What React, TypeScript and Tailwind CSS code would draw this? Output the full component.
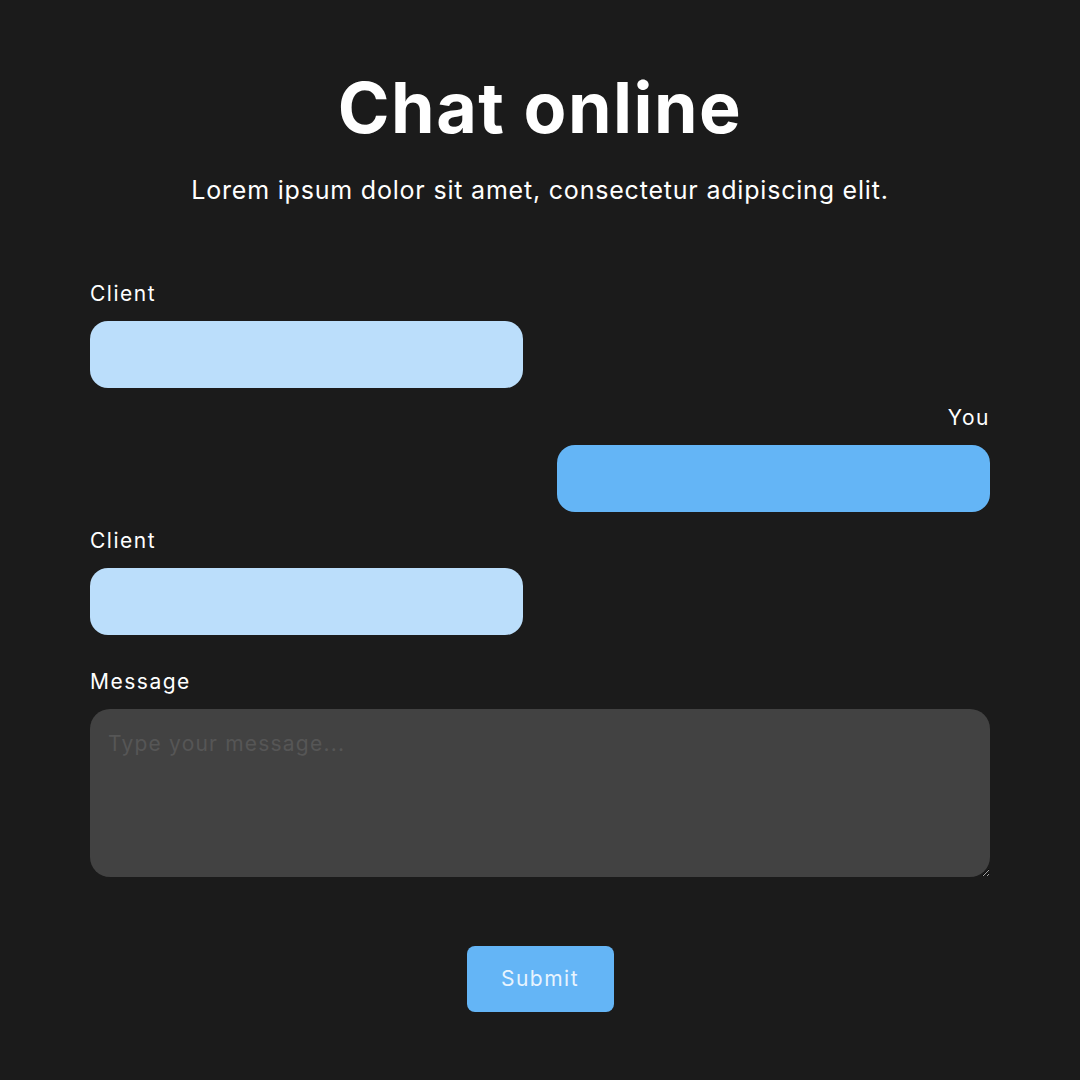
import React from "react";

function Label({ children, right }: { children: React.ReactNode; right?: boolean }) {
  return (
    <div className={`text-[21px] leading-[30px] tracking-[1.5px] text-white ${right ? "text-right" : ""}`}>{children}</div>
  );
}

export default function App() {
  return (
    <div className="min-h-[1080px] w-full bg-[#1b1b1b] font-[Inter,_'Noto_Sans',_sans-serif]">
      <div className="mx-auto w-[900px] pt-[68px]">
        <h1 className="text-center text-[70px] font-bold leading-[80px] tracking-[1.5px] text-white">
          Chat online
        </h1>
        <p className="mt-[24px] text-center text-[25px] leading-[36px] tracking-[0.8px] text-white">
          Lorem ipsum dolor sit amet, consectetur adipiscing elit.
        </p>

        <div className="mt-[71px] flex flex-col">
          <div className="flex flex-col items-start">
            <Label>Client</Label>
            <div className="mt-[12px] h-[67px] w-[433px] rounded-[18px] bg-[#bbdefb]" />
          </div>
          <div className="mt-[15px] flex flex-col items-end">
            <Label right>You</Label>
            <div className="mt-[12px] h-[67px] w-[433px] rounded-[18px] bg-[#64b5f6]" />
          </div>
          <div className="mt-[14px] flex flex-col items-start">
            <Label>Client</Label>
            <div className="mt-[12px] h-[67px] w-[433px] rounded-[18px] bg-[#bbdefb]" />
          </div>
          <div className="mt-[32px] flex flex-col">
            <Label>Message</Label>
            <textarea
              placeholder="Type your message..."
              className="mt-[12px] block h-[168px] w-full rounded-[20px] bg-[#424242] px-[18px] py-[20px] text-[21px] leading-[30px] tracking-[1.2px] text-white outline-none placeholder:text-[#565656]"
            />
          </div>
          <div className="mt-[69px] flex justify-center">
            <button className="h-[66px] w-[147px] rounded-[8px] bg-[#64b5f6] text-[21px] tracking-[1.5px] text-[#e8f4fe]">
              Submit
            </button>
          </div>
        </div>
      </div>
    </div>
  );
}
